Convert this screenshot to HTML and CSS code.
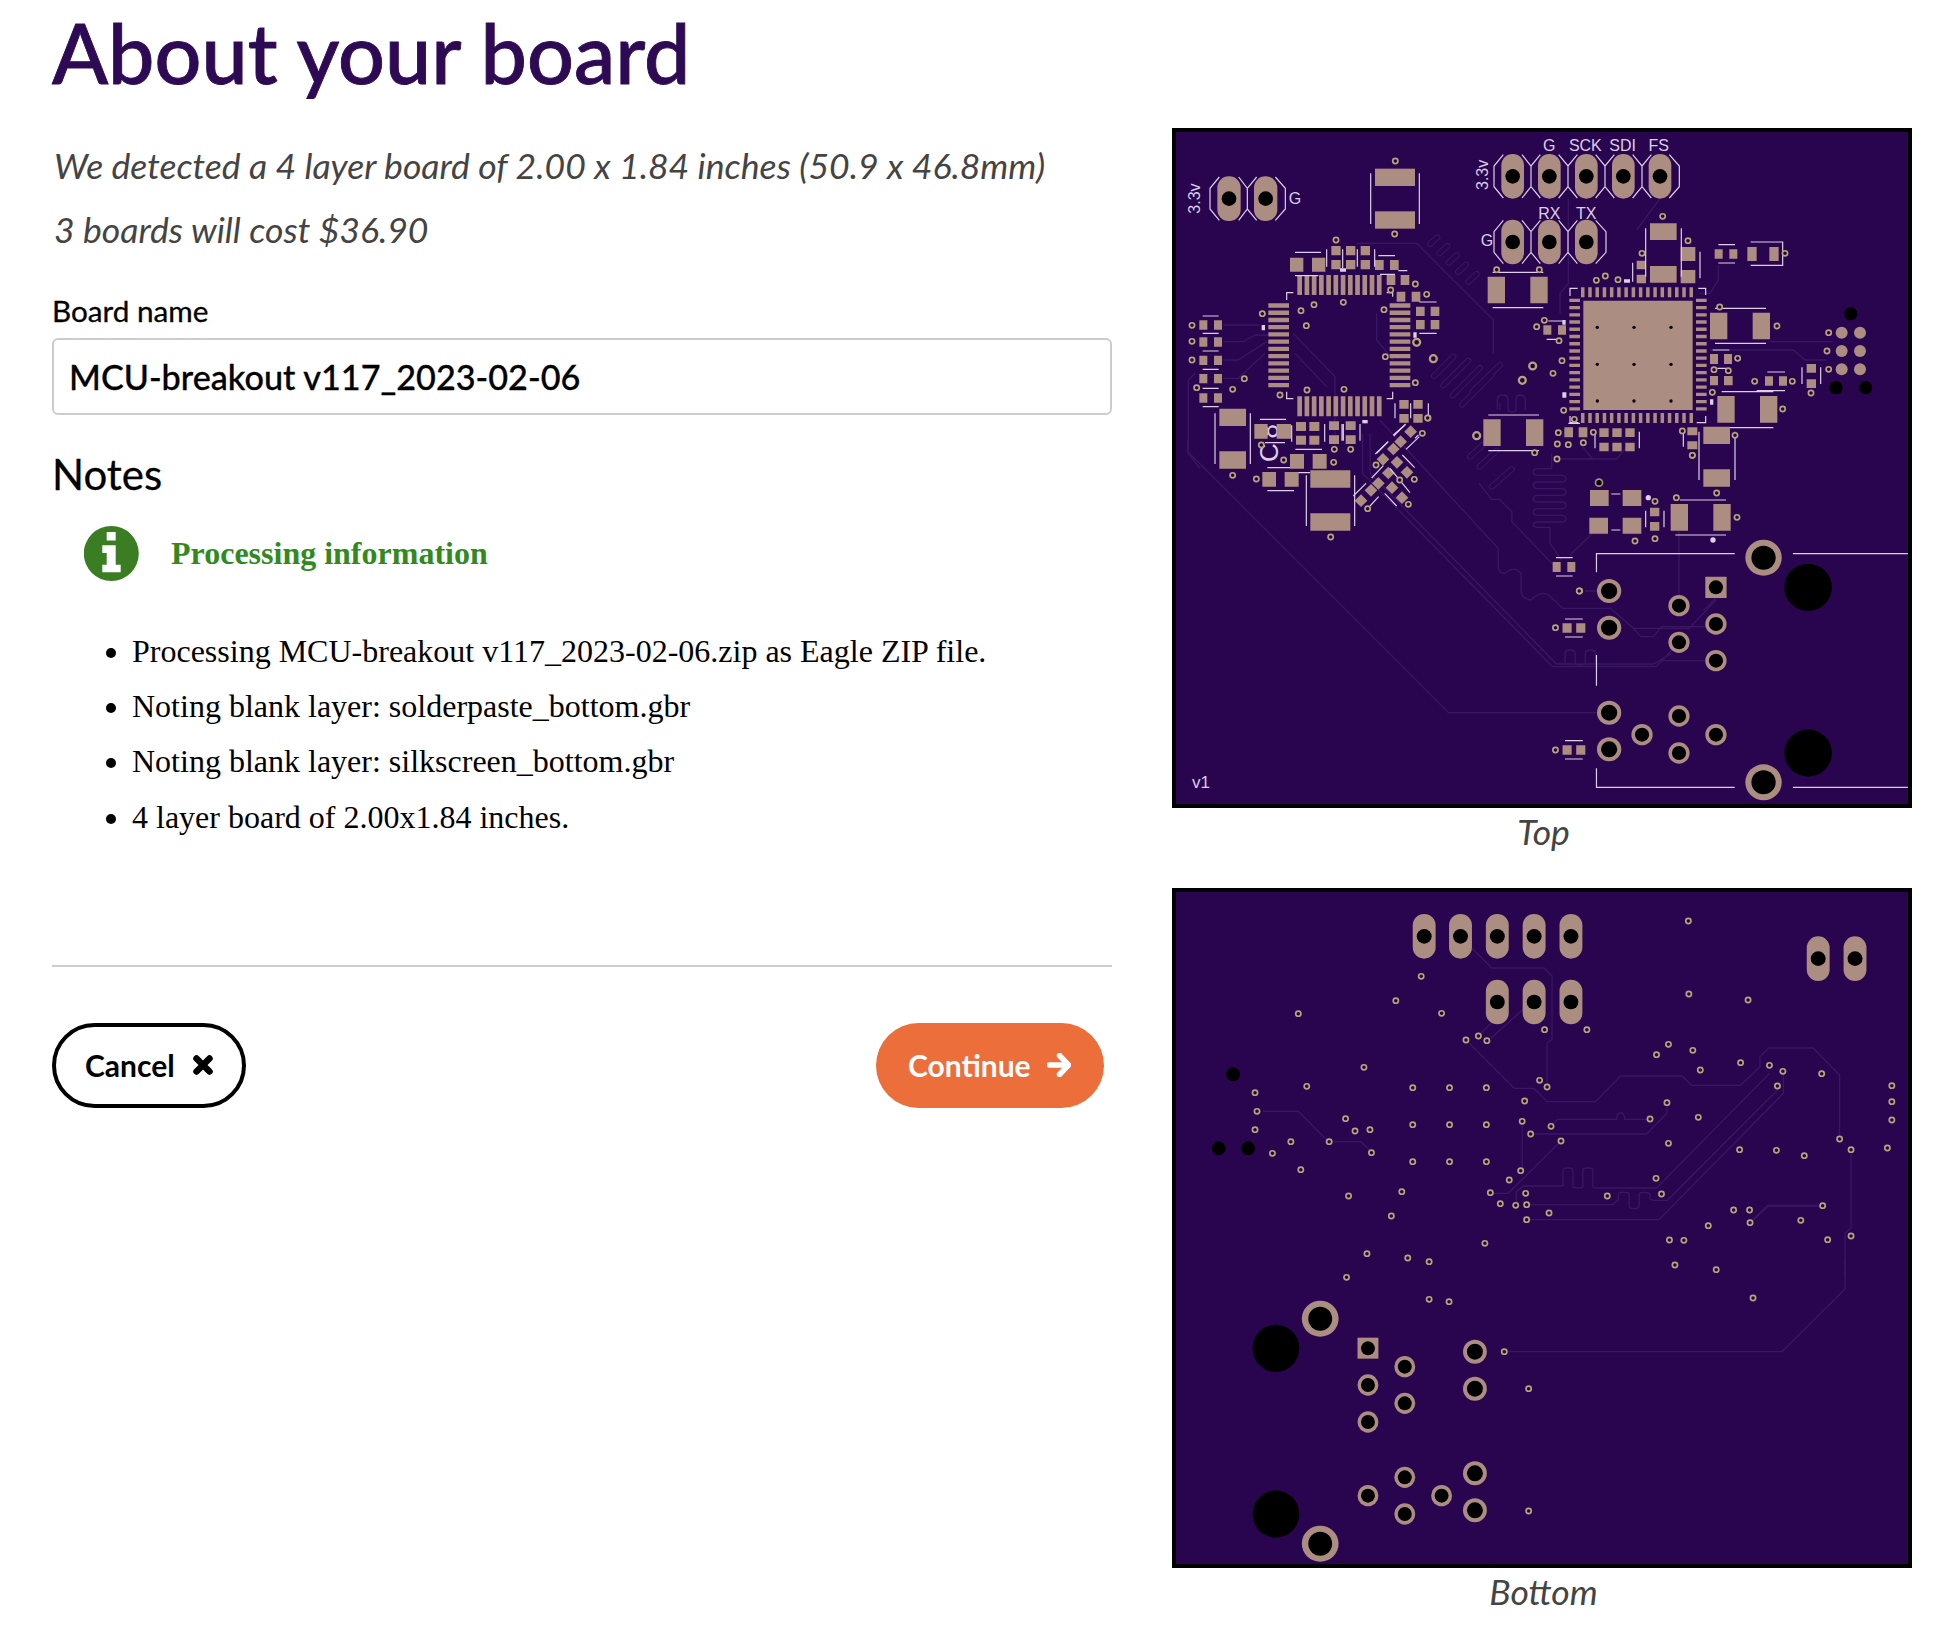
FILE: index.html
```html
<!DOCTYPE html>
<html lang="en">
<head>
<meta charset="utf-8">
<title>About your board</title>
<link rel="stylesheet" href="styles.css">
</head>
<body>
<main class="page">
  <section class="details">
    <h1 class="title">About your board</h1>
    <p class="summary">We detected a 4 layer board of 2.00 x 1.84 inches (50.9 x 46.8mm)</p>
    <p class="summary summary-cost">3 boards will cost $36.90</p>
    <label class="field-label" for="board-name">Board name</label>
    <input class="field-input" id="board-name" type="text" value="MCU-breakout v117_2023-02-06">
    <h2 class="notes-title">Notes</h2>
    <div class="notice-head">
      <svg class="notice-icon" viewBox="84 524 55 55" aria-hidden="true">
        <circle class="notice-disc" cx="111.3" cy="551.5" r="27.5"/>
        <path class="notice-glyph" d="M106.7 530h9v8.4h-9zM102.3 543.3h13.4v19.4h5v7.6h-18.4v-7.6h4.4v-11.7h-4.4z"/>
      </svg>
      <h3 class="notice-title">Processing information</h3>
    </div>
    <ul class="notice-list">
      <li>Processing MCU-breakout v117_2023-02-06.zip as Eagle ZIP file.</li>
      <li>Noting blank layer: solderpaste_bottom.gbr</li>
      <li>Noting blank layer: silkscreen_bottom.gbr</li>
      <li>4 layer board of 2.00x1.84 inches.</li>
    </ul>
    <hr class="rule">
    <div class="actions">
      <button class="btn btn-cancel" type="button">Cancel
        <svg class="btn-icon" viewBox="0 0 20 20" aria-hidden="true"><path class="icon-x" d="M3.5 3.5l13 13M16.5 3.5l-13 13"/></svg>
      </button>
      <button class="btn btn-continue" type="button">Continue
        <svg class="btn-icon" viewBox="0 0 24 24" aria-hidden="true"><path class="icon-arrow" d="M2.5 12h18M12.5 2.5l9 9.5-9 9.5"/></svg>
      </button>
    </div>
  </section>

  <section class="boards">
    <svg width="0" height="0" class="defs" aria-hidden="true">
      <defs>
        <g id="v"><circle class="via" r="2.6"/></g>
        <g id="V"><use href="#v" transform="scale(3)"/></g>
        <g id="B"><use href="#v" transform="scale(4)"/></g>
        <g id="W"><use href="#v" transform="scale(2.01 3)"/></g>
        <g id="X"><use href="#v" transform="scale(1.975 3)"/></g>
        <rect id="d" class="pad" x="-13.5" y="-13.5" width="27" height="27" transform="rotate(45)"/>
      </defs>
    </svg>

    <figure class="board">
      <svg class="pcb" viewBox="1176 132 732 672" role="img" aria-label="Top of the board">
        <rect class="pcb-bg" x="1176" y="132" width="732" height="672"/>

        <!-- copper traces -->
        <g transform="translate(1160 120) scale(.33333)">
          <path class="trace" d="M190 615H300M190 665H250L285 645H325M190 720H235L320 665M190 775H235L315 700M85 780L105 760M85 780V1000L120 1045M590 370H770L1000 600V700M400 640L525 770V980M405 700L500 800M650 580V660L700 720M1020 850V870"/>
          <g class="tube-o"><path d="M810 372L832 352M838 400L862 378M866 428L890 406M894 456L918 434M925 486L950 462"/><path d="M822 768L880 710M850 796L925 722M878 826L960 744M906 854L995 765M938 814L1020 735"/><path d="M930 1010L968 975M958 1040L1010 992M995 1100L1055 1048"/></g>
          <g class="tube-i"><path d="M810 372L832 352M838 400L862 378M866 428L890 406M894 456L918 434M925 486L950 462"/><path d="M822 768L880 710M850 796L925 722M878 826L960 744M906 854L995 765M938 814L1020 735"/><path d="M930 1010L968 975M958 1040L1010 992M995 1100L1055 1048"/></g>
          <path class="trace" d="M1012 870V840Q1012 825 1028 825Q1044 825 1044 840V868Q1044 876 1056 876Q1068 876 1068 868V840Q1068 825 1080 825Q1096 825 1096 840V870"/>
        </g>
        <g transform="translate(1480 120) scale(.33333)">
          <path class="trace" d="M265 236V490L240 520V580M540 236L470 330M715 435V480L690 520H660M870 665H1060M690 690H940L975 720H1040M230 1017H410L450 970M300 970L340 1020"/>
        </g>
        <g transform="translate(1470 420) scale(.33333)">
          <path class="trace" d="M245 100V146H203Q190 146 190 156T203 166H275Q288 166 288 176T275 186H203Q190 186 190 196T203 206H275Q288 206 288 216T275 226H203Q190 226 190 236T203 246H275Q288 246 288 256T275 266H203Q190 266 190 276T203 286H275Q288 286 288 296T275 306H203Q190 306 190 314T203 322H240V370L275 420M365 343L300 405M627 332V525M737 535L700 572M345 513H382"/>
        </g>
        <g transform="translate(1160 440) scale(.50633 .33333)">
          <path class="trace" d="M55 0V35L570 818H862M630 130L655 178H670L695 215V245L780 380M400 -20V100L775 680H980L1025 607M415 -20V100L783 672H975L1010 640M434 -60L668 325V380Q668 400 682 400Q700 375 713 400V450Q713 475 733 480Q752 450 768 465L795 505H890L935 565H1045L1098 480M935 565L950 590H975L990 560H1098M800 675V640Q800 630 810 630T820 640V665Q820 675 830 675T840 665V640Q840 630 850 630T860 640V675M990 662H1077"/>
        </g>

        <!-- zoomed region 1: left part -->
        <g transform="translate(1160 120) scale(.33333)">
          <rect class="pad" x="645" y="146" width="120" height="52"/>
          <rect class="pad" x="645" y="274" width="120" height="52"/>
          <path class="pad" d="M118 601h24v28h-24zM162 601h24v28h-24zM118 652h24v28h-24zM162 652h24v28h-24zM118 707h24v28h-24zM162 707h24v28h-24zM118 762h24v28h-24zM162 762h24v28h-24zM118 820h24v28h-24zM162 820h24v28h-24zM390 413h40v42h-40zM456 413h40v42h-40zM514 378h28v28h-28zM514 420h28v28h-28zM558 378h28v28h-28zM558 420h28v28h-28zM602 378h28v28h-28zM602 420h28v28h-28zM645 420h26v30h-26zM690 420h26v30h-26zM680 465h26v30h-26zM722 465h26v30h-26zM710 515h26v30h-26zM755 515h26v30h-26zM768 560h26v28h-26zM812 560h26v28h-26zM768 600h26v28h-26zM812 600h26v28h-26zM718 840h28v26h-28zM760 840h28v26h-28zM718 882h28v26h-28zM760 882h28v26h-28zM970 898h52v80h-52zM1098 898h52v80h-52z"/>
          <path class="pins" stroke-width="60" stroke-dasharray="14 7.7" d="M412 495H666M412 859H666"/>
          <path class="pins" stroke-width="62" stroke-dasharray="13 8.7" d="M356 550V805M720 550V805"/>
          <path class="silk-fill" d="M305 615h10v16h-10zM760 637h10v16h-10zM540 445h18v10h-18z"/>
          <path class="silk" d="M632 160V312M778 160V312M128 588H176M128 640H176M128 693H176M128 748H176M128 805H176M128 860H176M380 540V518H400M680 518H698V530M380 815V836H400M680 836H698V815M405 397H483M405 467H475M500 388V440M548 388V445M592 388V440M644 388V440M655 407H705M660 463H705M715 452H742M778 546H830M778 640H830M705 850V895M752 850V895M805 850V895M985 885H1137M985 992H1137M700 945L735 915M650 1000L685 965M765 955L775 945"/>
          <use href="#V" x="706" y="123"/><use href="#V" x="704" y="342"/><use href="#V" x="96" y="616"/><use href="#V" x="96" y="664"/><use href="#V" x="96" y="720"/><use href="#V" x="110" y="803"/><use href="#V" x="218" y="808"/><use href="#V" x="253" y="776"/><use href="#V" x="307" y="581"/><use href="#V" x="528" y="360"/><use href="#V" x="766" y="492"/><use href="#V" x="692" y="510"/><use href="#V" x="800" y="523"/><use href="#V" x="462" y="554"/><use href="#V" x="423" y="572"/><use href="#V" x="550" y="547"/><use href="#V" x="672" y="569"/><use href="#V" x="439" y="617"/><use href="#B" x="770" y="667"/><use href="#B" x="820" y="716"/><use href="#V" x="676" y="710"/><use href="#V" x="766" y="788"/><use href="#V" x="441" y="810"/><use href="#V" x="552" y="808"/><use href="#V" x="360" y="825"/><use href="#V" x="804" y="894"/><use href="#B" x="950" y="947"/><use href="#V" x="1124" y="998"/>
          <!-- left header -->
          <rect class="pad" x="172" y="169" width="70" height="134" rx="34"/>
          <rect class="pad" x="282" y="169" width="70" height="134" rx="34"/>
          <circle class="hole" cx="207" cy="236" r="22"/>
          <circle class="hole" cx="317" cy="236" r="22"/>
          <path class="silk" d="M178 171L150 205V267L178 301M236 171L262 205L290 171M236 301L262 267L290 301M262 205V267M346 171L376 205V267L346 301"/>
          <text class="silk-text" transform="translate(120 281) rotate(-90)">3.3v</text>
          <text class="silk-text" x="386" y="252">G</text>
          <text class="silk-text" transform="translate(984 210) rotate(-90)">3.3v</text>
          <text class="silk-text" x="962" y="378">G</text>
        </g>

        <!-- zoomed region 2: lower left parts -->
        <g transform="translate(1190 400) scale(.33333)">
          <text class="silk-text silk-c8" transform="translate(265 186) rotate(-90)">C8</text>
          <path class="pad" d="M88 26h80v52h-80zM88 154h80v52h-80zM193 72h40v44h-40zM260 72h43v44h-43zM318 66h30v27h-30zM358 66h30v27h-30zM318 107h30v27h-30zM358 107h30v27h-30zM417 64h30v26h-30zM467 64h30v26h-30zM417 106h30v26h-30zM467 106h30v26h-30zM300 162h42v44h-42zM368 162h42v44h-42zM217 216h41v44h-41zM284 216h42v44h-42zM361 211h120v52h-120zM361 340h120v52h-120z"/>
          <use href="#d" x="662" y="95"/><use href="#d" x="632" y="125"/><use href="#d" x="610" y="147"/><use href="#d" x="579" y="178"/><use href="#d" x="621" y="187"/><use href="#d" x="651" y="217"/><use href="#d" x="595" y="219"/><use href="#d" x="565" y="250"/><use href="#d" x="543" y="271"/><use href="#d" x="513" y="302"/><use href="#d" x="606" y="263"/><use href="#d" x="636" y="293"/>
          <path class="silk-fill" d="M517 60h16v10h-16z"/>
          <path class="silk" d="M75 40V192M181 40V192M210 58H288M225 128H285M305 76V125M404 72V125M456 72V122M460 72V122M510 72V122M316 148H396M232 203H300M232 272H312M325 218H360M349 226V378M494 226V378M611 108L647 72M556 162L594 125M648 148L688 110M637 165L674 203M600 205L660 278M545 234L580 197M490 288L528 250M540 318L566 290M584 280L620 318"/>
          <use href="#V" x="128" y="226"/><use href="#V" x="214" y="135"/><use href="#V" x="433" y="148"/><use href="#V" x="482" y="148"/><use href="#V" x="281" y="180"/><use href="#V" x="431" y="187"/><use href="#V" x="199" y="237"/><use href="#V" x="422" y="411"/><use href="#V" x="713" y="54"/><use href="#V" x="697" y="100"/><use href="#V" x="558" y="195"/><use href="#V" x="629" y="240"/><use href="#V" x="673" y="238"/><use href="#V" x="533" y="326"/><use href="#V" x="655" y="313"/>
        </g>

        <!-- zoomed region 3: upper right -->
        <g transform="translate(1480 120) scale(.33333)">
          <rect class="pad" x="64" y="102" width="68" height="134" rx="34"/><rect class="pad" x="174" y="102" width="68" height="134" rx="34"/><rect class="pad" x="285" y="102" width="68" height="134" rx="34"/><rect class="pad" x="396" y="102" width="68" height="134" rx="34"/><rect class="pad" x="506" y="102" width="68" height="134" rx="34"/>
          <rect class="pad" x="64" y="299" width="68" height="134" rx="34"/><rect class="pad" x="174" y="299" width="68" height="134" rx="34"/><rect class="pad" x="285" y="299" width="68" height="134" rx="34"/>
          <g class="hole"><circle cx="98" cy="169" r="22"/><circle cx="208" cy="169" r="22"/><circle cx="319" cy="169" r="22"/><circle cx="430" cy="169" r="22"/><circle cx="540" cy="169" r="22"/><circle cx="98" cy="366" r="22"/><circle cx="208" cy="366" r="22"/><circle cx="319" cy="366" r="22"/></g>
          <path class="silk" d="M70 104L42 138V200L70 234M126 104L153 138L181 104M126 234L153 200L181 234M153 138V200M236 104L264 138L292 104M236 234L264 200L292 234M264 138V200M347 104L375 138L403 104M347 234L375 200L403 234M375 138V200M458 104L486 138L514 104M458 234L486 200L514 234M486 138V200M568 104L598 138V200L568 234M70 301L42 335V397L70 431M126 301L153 335L181 301M126 431L153 397L181 431M153 335V397M236 301L264 335L292 301M236 431L264 397L292 431M264 335V397M347 301L378 335V397L347 431"/>
          <text class="silk-text" x="208" y="92" text-anchor="middle">G</text>
          <text class="silk-text" x="316" y="92" text-anchor="middle">SCK</text>
          <text class="silk-text" x="428" y="92" text-anchor="middle">SDI</text>
          <text class="silk-text" x="536" y="92" text-anchor="middle">FS</text>
          <text class="silk-text" x="208" y="297" text-anchor="middle">RX</text>
          <text class="silk-text" x="319" y="297" text-anchor="middle">TX</text>

          <path class="pad" d="M23 470h52v80h-52zM151 470h52v80h-52zM190 616h24v28h-24zM234 616h24v28h-24zM510 310h80v50h-80zM510 438h80v50h-80zM602 381h44v42h-44zM602 450h44v40h-44zM470 422h28v26h-28zM470 464h28v26h-28zM704 388h24v28h-24zM748 388h24v28h-24zM802 381h28v42h-28zM868 381h28v42h-28zM310 542h328v328h-328zM690 578h52v80h-52zM818 578h52v80h-52zM690 702h24v30h-24zM732 702h24v30h-24zM690 768h24v28h-24zM732 768h26v28h-26zM855 769h24v28h-24zM897 769h24v28h-24zM980 732h28v26h-28zM980 778h28v26h-28zM712 828h52v80h-52zM840 828h52v80h-52zM253 922h26v30h-26zM296 922h26v30h-26zM358 925h28v26h-28zM397 925h28v26h-28zM436 925h28v26h-28zM358 968h28v26h-28zM397 968h28v26h-28zM436 968h28v26h-28zM622 922h30v24h-30zM622 964h30v24h-30zM670 920h80v52h-80zM670 1048h80v52h-80z"/>
          <path class="pins" stroke-width="30" stroke-dasharray="10.5 11.2" d="M303 517H641M303 894H641"/>
          <path class="pins" stroke-width="32" stroke-dasharray="10 11.7" d="M284 536V875M664 536V875"/>
          <g class="hole"><circle cx="352" cy="622" r="5"/><circle cx="462" cy="622" r="5"/><circle cx="573" cy="622" r="5"/><circle cx="352" cy="733" r="5"/><circle cx="462" cy="733" r="5"/><circle cx="573" cy="733" r="5"/><circle cx="352" cy="843" r="5"/><circle cx="462" cy="843" r="5"/><circle cx="573" cy="843" r="5"/></g>
          <g class="pad"><circle cx="1085" cy="638" r="18"/><circle cx="1140" cy="638" r="18"/><circle cx="1085" cy="693" r="18"/><circle cx="1140" cy="693" r="18"/><circle cx="1085" cy="748" r="18"/><circle cx="1140" cy="748" r="18"/></g>
          <g class="hole"><circle cx="1112" cy="581" r="20"/><circle cx="1068" cy="803" r="20"/><circle cx="1157" cy="803" r="20"/></g>
          <path class="silk-fill" d="M432 478h18v10h-18zM247 600h10v14h-10zM690 838h10v16h-10zM247 817h12v16h-12z"/>
          <path class="silk" d="M38 457H190M38 563H190M205 603H250M200 658H235M497 325V470M604 325V470M660 395V475M458 428V485M715 374H765M715 429H765M812 366H908V436H812M270 528V505H293M655 505H677V525M270 888V908H295M650 908H677V888M705 565H858M705 670H858M698 690H748M712 745H740M862 756H915M830 812H915M966 742V792M1022 742V792M725 815H880M750 923H880M345 935V985M478 935V985M610 935V980M657 935V1080M765 935V1080M265 910H300"/>
          <use href="#V" x="50" y="449"/><use href="#V" x="178" y="449"/><use href="#V" x="170" y="620"/><use href="#V" x="193" y="601"/><use href="#V" x="237" y="662"/><use href="#V" x="246" y="722"/><use href="#B" x="158" y="738"/><use href="#V" x="219" y="760"/><use href="#B" x="127" y="781"/><use href="#V" x="548" y="289"/><use href="#V" x="624" y="362"/><use href="#V" x="486" y="400"/><use href="#V" x="915" y="400"/><use href="#V" x="349" y="481"/><use href="#V" x="376" y="468"/><use href="#V" x="414" y="479"/><use href="#V" x="719" y="561"/><use href="#V" x="891" y="618"/><use href="#V" x="773" y="715"/><use href="#V" x="702" y="749"/><use href="#V" x="745" y="752"/><use href="#V" x="824" y="784"/><use href="#V" x="937" y="784"/><use href="#V" x="993" y="819"/><use href="#V" x="1046" y="638"/><use href="#V" x="1041" y="693"/><use href="#V" x="1046" y="748"/><use href="#V" x="697" y="817"/><use href="#V" x="908" y="867"/><use href="#V" x="251" y="871"/><use href="#V" x="283" y="898"/><use href="#V" x="235" y="938"/><use href="#V" x="232" y="972"/><use href="#V" x="265" y="974"/><use href="#V" x="310" y="968"/><use href="#V" x="340" y="937"/><use href="#V" x="231" y="1017"/><use href="#V" x="607" y="933"/><use href="#V" x="637" y="1006"/><use href="#V" x="765" y="946"/>
        </g>

        <!-- zoomed region 4: mid right -->
        <g transform="translate(1470 420) scale(.33333)">
          <path class="pad" d="M360 210h56v48h-56zM458 210h56v48h-56zM358 293h56v48h-56zM458 293h56v48h-56zM540 263h28v26h-28zM540 306h28v26h-28zM602 252h52v80h-52zM730 252h52v80h-52zM248 426h24v30h-24zM292 426h24v30h-24z"/>
          <path class="silk" d="M424 222H451M424 330H451M527 272V322M582 272V322M630 240H768M616 345H768M258 413H308M258 468H308"/>
          <g class="silk-fill"><circle cx="535" cy="233" r="8"/><circle cx="729" cy="360" r="8"/></g>
          <use href="#V" x="740" y="219"/><use href="#V" x="667" y="106"/><use href="#V" x="555" y="244"/><use href="#V" x="495" y="363"/><use href="#V" x="555" y="356"/><use href="#V" x="619" y="233"/><use href="#V" x="801" y="292"/><use href="#V" x="329" y="513"/>
          <circle class="pad" cx="387" cy="188" r="13"/><circle class="hole" cx="387" cy="188" r="8"/>
        </g>

        <!-- zoomed region 5: connector -->
        <g transform="translate(1160 440) scale(.50633 .33333)">
          <path class="silk" d="M862 397V341H1135M1250 341H1477M862 645V737M862 985V1042H1135M1250 1042H1477M800 537H835M800 591H835M800 902H835M800 957H835"/>
          <path class="pad" d="M795 550h18v28h-18zM822 550h18v28h-18zM795 916h18v28h-18zM822 916h18v28h-18zM1077 410h42v64h-42z"/>
          <use href="#X" x="828" y="453"/><use href="#X" x="781" y="563"/><use href="#X" x="781" y="930"/>
          <g class="pad"><ellipse cx="1192" cy="353" rx="36" ry="54"/><ellipse cx="1192" cy="1027" rx="36" ry="54"/><ellipse cx="887" cy="453" rx="24" ry="36"/><ellipse cx="887" cy="563" rx="24" ry="36"/><ellipse cx="887" cy="818" rx="24" ry="36"/><ellipse cx="887" cy="928" rx="24" ry="36"/><ellipse cx="1025" cy="497" rx="21" ry="32"/><ellipse cx="1098" cy="552" rx="21" ry="32"/><ellipse cx="1025" cy="607" rx="21" ry="32"/><ellipse cx="1098" cy="662" rx="21" ry="32"/><ellipse cx="1025" cy="828" rx="21" ry="32"/><ellipse cx="952" cy="884" rx="21" ry="32"/><ellipse cx="1098" cy="884" rx="21" ry="32"/><ellipse cx="1025" cy="939" rx="21" ry="32"/></g>
          <g class="hole"><ellipse cx="1192" cy="353" rx="24" ry="36"/><ellipse cx="1192" cy="1027" rx="24" ry="36"/><ellipse cx="887" cy="453" rx="16" ry="24"/><ellipse cx="887" cy="563" rx="16" ry="24"/><ellipse cx="887" cy="818" rx="16" ry="24"/><ellipse cx="887" cy="928" rx="16" ry="24"/><ellipse cx="1025" cy="497" rx="14" ry="21"/><ellipse cx="1098" cy="552" rx="14" ry="21"/><ellipse cx="1025" cy="607" rx="14" ry="21"/><ellipse cx="1098" cy="662" rx="14" ry="21"/><ellipse cx="1025" cy="828" rx="14" ry="21"/><ellipse cx="952" cy="884" rx="14" ry="21"/><ellipse cx="1098" cy="884" rx="14" ry="21"/><ellipse cx="1025" cy="939" rx="14" ry="21"/><ellipse cx="1098" cy="442" rx="14" ry="21"/><ellipse cx="1280" cy="442" rx="47" ry="71"/><ellipse cx="1280" cy="939" rx="47" ry="71"/></g>
        </g>
        <text class="silk-small" x="1192" y="788">v1</text>
      </svg>
      <figcaption class="board-caption">Top</figcaption>
    </figure>

    <figure class="board">
      <svg class="pcb" viewBox="1176 892 732 672" role="img" aria-label="Bottom of the board">
        <rect class="pcb-bg" x="1176" y="892" width="732" height="672"/>
        <g transform="translate(1160 880) scale(.49751 .33333)">
          <path class="trace" d="M627 205L667 264H772L788 288V478L778 490V620M615 480L712 625H752L778 665H875L926 588H1050L1068 616H1167L1206 560V530L1223 504H1313L1366 585V777M207 694H278L333 777M345 785H404L425 815M640 468L665 430M665 475L730 388M728 724V860M786 735L800 718H918Q918 698 926 698T934 718H985M745 762H978L1019 700V668M806 783L700 940H664M716 975V935L730 918H810V870Q810 864 818 864H822Q830 864 830 870V918Q830 924 840 924T850 918V870Q850 864 858 864H862Q870 864 870 870V918Q870 924 878 924H998L1225 580M737 974H910L921 960V945Q921 937 929 937H935Q943 937 943 945V978Q943 986 953 986T963 978V945Q963 937 971 937H975Q985 937 985 945V955Q985 961 993 961H1020L1241 630M737 1019H1003L1253 640V574M1389 809V1043L1377 1060V1190"/>
          <path class="trace-thick" d="M1186 1028L1222 977H1332"/>
          <g class="pad"><rect x="508" y="102" width="46" height="134" rx="23" ry="34"/><rect x="581" y="102" width="46" height="134" rx="23" ry="34"/><rect x="655" y="102" width="46" height="134" rx="23" ry="34"/><rect x="729" y="102" width="46" height="134" rx="23" ry="34"/><rect x="803" y="102" width="46" height="134" rx="23" ry="34"/><rect x="655" y="299" width="46" height="134" rx="23" ry="34"/><rect x="729" y="299" width="46" height="134" rx="23" ry="34"/><rect x="803" y="299" width="46" height="134" rx="23" ry="34"/><rect x="1300" y="169" width="46" height="134" rx="23" ry="34"/><rect x="1374" y="169" width="46" height="134" rx="23" ry="34"/></g>
          <g class="hole"><ellipse cx="531" cy="169" rx="15" ry="22"/><ellipse cx="604" cy="169" rx="15" ry="22"/><ellipse cx="678" cy="169" rx="15" ry="22"/><ellipse cx="752" cy="169" rx="15" ry="22"/><ellipse cx="826" cy="169" rx="15" ry="22"/><ellipse cx="678" cy="366" rx="15" ry="22"/><ellipse cx="752" cy="366" rx="15" ry="22"/><ellipse cx="826" cy="366" rx="15" ry="22"/><ellipse cx="1323" cy="236" rx="15" ry="22"/><ellipse cx="1397" cy="236" rx="15" ry="22"/><ellipse cx="147" cy="583" rx="14" ry="21"/><ellipse cx="118" cy="805" rx="14" ry="21"/><ellipse cx="177" cy="805" rx="14" ry="21"/></g>
          <use href="#W" x="1062" y="123"/><use href="#W" x="525" y="289"/><use href="#W" x="474" y="362"/><use href="#W" x="566" y="400"/><use href="#W" x="278" y="401"/><use href="#W" x="1063" y="342"/><use href="#W" x="1182" y="360"/><use href="#W" x="773" y="449"/><use href="#W" x="858" y="449"/><use href="#W" x="640" y="468"/><use href="#W" x="615" y="480"/><use href="#W" x="657" y="482"/><use href="#W" x="1022" y="493"/><use href="#W" x="998" y="524"/><use href="#W" x="1071" y="511"/><use href="#W" x="1167" y="548"/><use href="#W" x="1225" y="556"/><use href="#W" x="1252" y="574"/><use href="#W" x="1086" y="570"/><use href="#W" x="1330" y="581"/><use href="#W" x="410" y="562"/><use href="#W" x="295" y="619"/><use href="#W" x="191" y="638"/><use href="#W" x="508" y="623"/><use href="#W" x="582" y="623"/><use href="#W" x="656" y="623"/><use href="#W" x="763" y="601"/><use href="#W" x="778" y="621"/><use href="#W" x="1241" y="618"/><use href="#W" x="1471" y="617"/><use href="#W" x="1471" y="665"/><use href="#W" x="733" y="663"/><use href="#W" x="1019" y="668"/><use href="#W" x="195" y="694"/><use href="#W" x="373" y="716"/><use href="#W" x="985" y="717"/><use href="#W" x="1082" y="712"/><use href="#W" x="1471" y="720"/><use href="#W" x="508" y="734"/><use href="#W" x="582" y="734"/><use href="#W" x="656" y="734"/><use href="#W" x="728" y="724"/><use href="#W" x="786" y="739"/><use href="#W" x="392" y="753"/><use href="#W" x="422" y="749"/><use href="#W" x="191" y="749"/><use href="#W" x="745" y="762"/><use href="#W" x="806" y="783"/><use href="#W" x="263" y="785"/><use href="#W" x="340" y="785"/><use href="#W" x="1022" y="790"/><use href="#W" x="1366" y="777"/><use href="#W" x="1462" y="804"/><use href="#W" x="1389" y="809"/><use href="#W" x="1239" y="811"/><use href="#W" x="1165" y="809"/><use href="#W" x="1295" y="827"/><use href="#W" x="226" y="820"/><use href="#W" x="425" y="818"/><use href="#W" x="508" y="845"/><use href="#W" x="582" y="845"/><use href="#W" x="656" y="845"/><use href="#W" x="283" y="869"/><use href="#W" x="725" y="872"/><use href="#W" x="702" y="900"/><use href="#W" x="997" y="895"/><use href="#W" x="379" y="948"/><use href="#W" x="486" y="935"/><use href="#W" x="664" y="938"/><use href="#W" x="735" y="940"/><use href="#W" x="1008" y="942"/><use href="#W" x="899" y="948"/><use href="#W" x="684" y="971"/><use href="#W" x="715" y="976"/><use href="#W" x="737" y="974"/><use href="#W" x="782" y="999"/><use href="#W" x="465" y="1008"/><use href="#W" x="1153" y="990"/><use href="#W" x="1185" y="990"/><use href="#W" x="1332" y="977"/><use href="#W" x="1186" y="1028"/><use href="#W" x="1288" y="1021"/><use href="#W" x="737" y="1019"/><use href="#W" x="1102" y="1037"/><use href="#W" x="1024" y="1080"/><use href="#W" x="1053" y="1081"/><use href="#W" x="1342" y="1079"/><use href="#W" x="1389" y="1068"/><use href="#W" x="653" y="1090"/><use href="#W" x="416" y="1121"/><use href="#W" x="498" y="1134"/><use href="#W" x="541" y="1145"/><use href="#W" x="1035" y="1155"/><use href="#W" x="1118" y="1169"/><use href="#W" x="375" y="1192"/>
        </g>
        <g transform="translate(1160 1260) scale(.49751 .33333)">
          <path class="trace" d="M1377 0V87L1250 275H700"/>
          <use href="#W" x="541" y="118"/><use href="#W" x="581" y="125"/><use href="#W" x="1192" y="114"/><use href="#W" x="692" y="275"/><use href="#W" x="741" y="386"/><use href="#W" x="741" y="753"/>
          <rect class="pad" x="397" y="233" width="42" height="63"/>
          <g class="pad"><ellipse cx="322" cy="176" rx="37" ry="54"/><ellipse cx="322" cy="851" rx="37" ry="54"/><ellipse cx="492" cy="320" rx="21" ry="32"/><ellipse cx="418" cy="375" rx="21" ry="32"/><ellipse cx="492" cy="430" rx="21" ry="32"/><ellipse cx="418" cy="486" rx="21" ry="32"/><ellipse cx="492" cy="652" rx="21" ry="32"/><ellipse cx="418" cy="707" rx="21" ry="32"/><ellipse cx="566" cy="707" rx="21" ry="32"/><ellipse cx="492" cy="762" rx="21" ry="32"/><ellipse cx="633" cy="275" rx="24" ry="36"/><ellipse cx="633" cy="386" rx="24" ry="36"/><ellipse cx="633" cy="640" rx="24" ry="36"/><ellipse cx="633" cy="751" rx="24" ry="36"/></g>
          <g class="hole"><ellipse cx="322" cy="176" rx="24" ry="36"/><ellipse cx="322" cy="851" rx="24" ry="36"/><ellipse cx="233" cy="265" rx="47" ry="71"/><ellipse cx="233" cy="762" rx="47" ry="71"/><ellipse cx="418" cy="265" rx="14" ry="21"/><ellipse cx="492" cy="320" rx="14" ry="21"/><ellipse cx="418" cy="375" rx="14" ry="21"/><ellipse cx="492" cy="430" rx="14" ry="21"/><ellipse cx="418" cy="486" rx="14" ry="21"/><ellipse cx="492" cy="652" rx="14" ry="21"/><ellipse cx="418" cy="707" rx="14" ry="21"/><ellipse cx="566" cy="707" rx="14" ry="21"/><ellipse cx="492" cy="762" rx="14" ry="21"/><ellipse cx="633" cy="275" rx="16" ry="24"/><ellipse cx="633" cy="386" rx="16" ry="24"/><ellipse cx="633" cy="640" rx="16" ry="24"/><ellipse cx="633" cy="751" rx="16" ry="24"/></g>
        </g>
      </svg>
      <figcaption class="board-caption">Bottom</figcaption>
    </figure>
  </section>
</main>
</body>
</html>
```

FILE: styles.css
```css
* { box-sizing: border-box; }

html, body { margin: 0; background: #fff; }

body { font-family: Lato, "Noto Sans", sans-serif; color: #000; }

.page {
  display: grid;
  grid-template-columns: 1060px 740px;
  column-gap: 60px;
  padding: 0 42px 0 52px;
  min-height: 1648px;
  align-items: start;
}

.title {
  margin: 0;
  font-size: 82.6px;
  line-height: 104px;
  font-weight: 500;
  -webkit-text-stroke: 0.9px #2f0a54;
  color: #2f0a54;
}

.summary {
  margin: 38px 0 0 2px;
  font-size: 35.6px;
  line-height: 48px;
  font-style: italic;
  color: #444;
}

.summary-cost { margin-top: 16px; }

.field-label {
  display: block;
  margin-top: 37px;
  font-size: 29.7px;
  line-height: 40px;
  -webkit-text-stroke: 0.3px #000;
}

.field-input {
  display: block;
  width: 1060px;
  height: 77px;
  margin-top: 7px;
  padding: 0 15px;
  border: 2px solid #ccc;
  border-radius: 6px;
  font: 500 34.2px Lato, sans-serif;
  -webkit-text-stroke: 0.3px #000;
  color: #000;
  background: #fff;
}

.notes-title {
  margin: 35px 0 0;
  font-size: 42px;
  line-height: 48px;
  font-weight: 400;
  -webkit-text-stroke: 0.3px #000;
}

.notice-head {
  display: flex;
  align-items: center;
  gap: 32px;
  margin: 28px 0 0 32px;
}

.notice-icon { width: 55px; height: 55px; flex: none; }
.notice-disc { fill: #3a7d22; }
.notice-glyph { fill: #fff; }

.notice-title {
  margin: 0;
  font: bold 32px "Liberation Serif", serif;
  color: #328a1e;
}

.notice-list {
  margin: 52px 0 0;
  padding: 0 0 0 80px;
  font: 32px/37px "Liberation Serif", serif;
}

.notice-list li { margin-bottom: 18.2px; }

.rule {
  margin: 129px 0 0;
  border: 0;
  border-top: 2px solid #ccc;
}

.actions {
  display: flex;
  justify-content: space-between;
  margin: 56px 8px 0 0;
}

.btn {
  display: inline-flex;
  align-items: center;
  height: 85px;
  border-radius: 43px;
  font: bold 30px Lato, sans-serif;
}

.btn-cancel {
  width: 194px;
  padding: 0 0 0 29px;
  background: #fff;
  border: 4px solid #000;
  color: #000;
  gap: 18px;
}

.btn-continue {
  width: 228px;
  padding: 0 0 0 32px;
  background: #ec6e3a;
  border: 0;
  color: #fff;
  gap: 16px;
}

.btn-cancel .btn-icon { width: 20px; height: 20px; }
.btn-continue .btn-icon { width: 24px; height: 24px; }

.icon-x { fill: none; stroke: #000; stroke-width: 6.5; stroke-linecap: round; }
.icon-arrow { fill: none; stroke: #fff; stroke-width: 5.5; stroke-linecap: round; stroke-linejoin: round; }

.boards { display: flex; flex-direction: column; padding-top: 128px; gap: 0; }
.defs { position: absolute; }

.board { margin: 0 0 24px; width: 740px; }

.pcb {
  display: block;
  width: 740px;
  height: 680px;
  border: 4px solid #000;
}

.board-caption {
  height: 56px;
  padding-left: 3px;
  font-size: 35.5px;
  line-height: 47px;
  font-style: italic;
  text-align: center;
  color: #444;
}

.pcb-bg { fill: #2a054f; }
.pad { fill: #ab8d81; }
.pins { fill: none; stroke: #ab8d81; }
.hole { fill: #000; }
.via { fill: #1f0839; stroke: #b8a27f; stroke-width: 1.7; }
.silk { fill: none; stroke: #dccfe6; stroke-width: 1.2; vector-effect: non-scaling-stroke; }
.silk-fill { fill: #dccfe6; }
.silk-text { fill: #dccfe6; font: 48px "Liberation Sans", sans-serif; }
.silk-c8 { font-size: 78px; letter-spacing: 14px; }
.silk-small { fill: #dccfe6; font: 17px "Liberation Sans", sans-serif; }
.trace, .trace-thick { fill: none; stroke: #391763; vector-effect: non-scaling-stroke; stroke-linejoin: round; }
.trace { stroke-width: 1.3; }
.trace-thick { stroke-width: 2; }
.tube-o path, .tube-i path { fill: none; stroke-linecap: round; vector-effect: non-scaling-stroke; }
.tube-o path { stroke: #391763; stroke-width: 6; }
.tube-i path { stroke: #2a054f; stroke-width: 4; }
```
